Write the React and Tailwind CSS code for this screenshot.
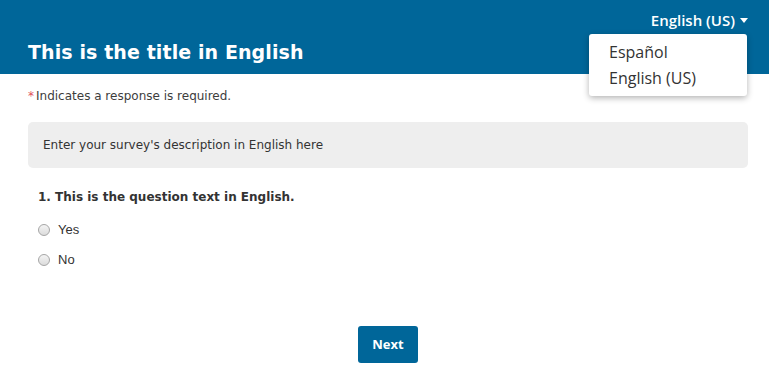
export default function App() {
  return (
    <div className="relative w-[769px] h-[382px] bg-white overflow-hidden">
      <header className="h-[74px] bg-[#006699] flex flex-col">
        <div className="flex justify-end pr-[21px] pt-[6px] h-[34px]">
          <button className="flex items-center gap-[5px] text-white text-[15px] font-semibold leading-[22px]" style={{ fontFamily: '"Open Sans", sans-serif' }}>
            English (US)
            <svg width="8" height="5" viewBox="0 0 8 5"><path d="M0 0h8L4 5z" fill="white" /></svg>
          </button>
        </div>
        <h1 className="pl-[28px] mt-[6px] text-white text-[19px] font-bold leading-[24px] tracking-[0.1px]" style={{ fontFamily: '"DejaVu Sans", Verdana, sans-serif' }}>
          This is the title in English
        </h1>
      </header>

      <div className="absolute left-[589px] top-[34px] w-[158px] h-[62px] bg-white rounded-[3px] shadow-[0_2px_6px_rgba(0,0,0,0.3)] flex flex-col justify-center pl-[20px] text-[16px] text-[#333] leading-[26px]" style={{ fontFamily: '"Open Sans", sans-serif' }}>
        <div>Español</div>
        <div>English (US)</div>
      </div>

      <main className="pl-[28px] pr-[21px]" style={{ fontFamily: '"DejaVu Sans", Verdana, sans-serif' }}>
        <p className="mt-[15px] text-[12px] text-[#3d3d3d] leading-[14px]">
          <span className="text-[#e0525a] mr-[2px]">*</span>Indicates a response is required.
        </p>
        <div className="mt-[19px] h-[46px] rounded-[5px] bg-[#eeeeee] flex items-center px-[15px] text-[12px] text-[#333]">
          Enter your survey's description in English here
        </div>
        <div className="pl-[10px] mt-[21px]">
          <div className="text-[12px] font-bold text-[#333] leading-[16px]">1. This is the question text in English.</div>
          <div className="mt-[18px] flex flex-col gap-[16px]" style={{ fontFamily: 'Arial, "Liberation Sans", sans-serif' }}>
            {["Yes", "No"].map((l) => (
              <label key={l} className="flex items-center gap-[8px] text-[13px] text-[#333] h-[14px]">
                <span className="w-[12px] h-[12px] rounded-full border border-[#a6a6a6] bg-gradient-to-b from-[#f4f4f4] to-[#dcdcdc]" />
                {l}
              </label>
            ))}
          </div>
        </div>
        <div className="flex justify-center mt-[59px]">
          <button className="w-[60px] h-[37px] rounded-[3px] bg-[#006699] text-white text-[13px] font-bold" style={{ fontFamily: '"Open Sans", sans-serif' }}>
            Next
          </button>
        </div>
      </main>
    </div>
  );
}
